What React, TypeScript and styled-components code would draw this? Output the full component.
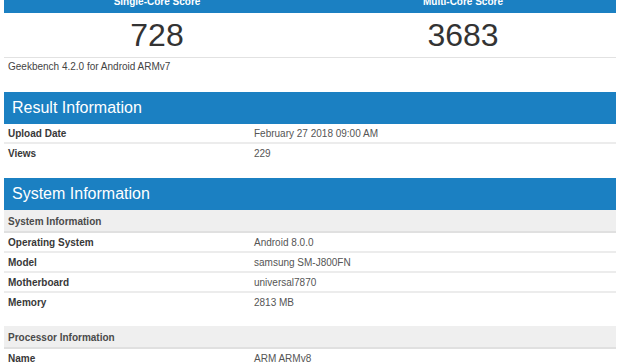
import React from "react";
import styled, { createGlobalStyle } from "styled-components";

const Global = createGlobalStyle`
  html, body { margin: 0; padding: 0; background: #ffffff; overflow: hidden; }
  body { font-family: "Liberation Sans", Arial, sans-serif; color: #333; }
`;

const BLUE = "#1b80c2";

const Page = styled.div`
  width: 620px;
  padding: 0 4px;
  box-sizing: border-box;
`;

const ScoreHead = styled.div`
  display: grid;
  grid-template-columns: 1fr 1fr;
  height: 13px;
  background: ${BLUE};
  overflow: hidden;
`;

const ScoreHeadCell = styled.div`
  margin-top: -3px;
  text-align: center;
  color: #ffffff;
  font-size: 10px;
  font-weight: bold;
  line-height: 10px;
`;

const ScoreRow = styled.div`
  display: grid;
  grid-template-columns: 1fr 1fr;
  height: 44px;
  border-bottom: 1px solid #e2e2e2;
`;

const ScoreValue = styled.div`
  text-align: center;
  font-size: 32px;
  line-height: 45px;
  color: #333333;
`;

const Platform = styled.div`
  padding: 3px 4px 0;
  font-size: 10px;
  line-height: 12px;
  color: #444444;
  height: 34px;
  box-sizing: border-box;
`;

const Section = styled.section<{ $gap?: number }>`
  margin-bottom: ${(p) => p.$gap ?? 0}px;
`;

const SectionTitle = styled.div`
  background: ${BLUE};
  color: #ffffff;
  height: 32px;
  line-height: 32px;
  padding-left: 8px;
  font-size: 16px;
`;

const Table = styled.div<{ $gap?: number }>`
  margin-bottom: ${(p) => p.$gap ?? 0}px;
`;

const SubHead = styled.div`
  background: #efefef;
  height: 23px;
  padding-top: 2px;
  line-height: 19px;
  box-sizing: border-box;
  border-bottom: 2px solid #e0e0e0;
  padding-left: 4px;
  font-size: 10px;
  font-weight: bold;
  color: #4a4a4a;
`;

const Row = styled.div<{ $last?: boolean }>`
  display: grid;
  grid-template-columns: 246px 1fr;
  height: 20px;
  box-sizing: border-box;
  border-bottom: ${(p) => (p.$last ? "none" : "2px solid #ececec")};
  font-size: 10px;
  padding-top: 2px;
  line-height: 16px;
`;

const Label = styled.div`
  padding-left: 4px;
  font-weight: bold;
  color: #383838;
`;

const Value = styled.div`
  padding-left: 4px;
  color: #555555;
`;

type Item = [string, string];

const InfoRows = ({ items }: { items: Item[] }) => (
  <>
    {items.map(([k, v], i) => (
      <Row key={k} $last={i === items.length - 1}>
        <Label>{k}</Label>
        <Value>{v}</Value>
      </Row>
    ))}
  </>
);

export default function App() {
  return (
    <>
      <Global />
      <Page>
        <ScoreHead>
          <ScoreHeadCell>Single-Core Score</ScoreHeadCell>
          <ScoreHeadCell>Multi-Core Score</ScoreHeadCell>
        </ScoreHead>
        <ScoreRow>
          <ScoreValue>728</ScoreValue>
          <ScoreValue>3683</ScoreValue>
        </ScoreRow>
        <Platform>Geekbench 4.2.0 for Android ARMv7</Platform>

        <Section $gap={14}>
          <SectionTitle>Result Information</SectionTitle>
          <InfoRows
            items={[
              ["Upload Date", "February 27 2018 09:00 AM"],
              ["Views", "229"],
            ]}
          />
        </Section>

        <Section>
          <SectionTitle>System Information</SectionTitle>
          <Table $gap={13}>
            <SubHead>System Information</SubHead>
            <InfoRows
              items={[
                ["Operating System", "Android 8.0.0"],
                ["Model", "samsung SM-J800FN"],
                ["Motherboard", "universal7870"],
                ["Memory", "2813 MB"],
              ]}
            />
          </Table>
          <Table>
            <SubHead>Processor Information</SubHead>
            <InfoRows items={[["Name", "ARM ARMv8"]]} />
          </Table>
        </Section>
      </Page>
    </>
  );
}
